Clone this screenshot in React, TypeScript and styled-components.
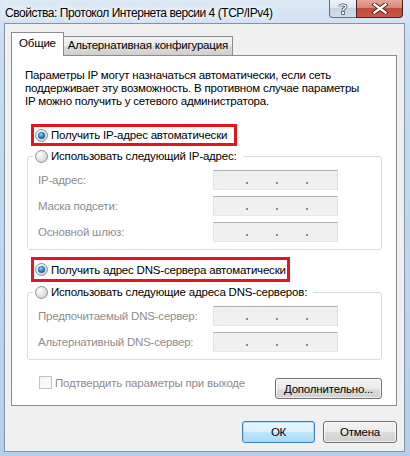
import * as React from 'react';
import styled, {createGlobalStyle, css} from 'styled-components';

const GlobalStyle = createGlobalStyle`
  html, body {
    margin: 0;
    padding: 0;
  }
  body {
    width: 410px;
    height: 456px;
    overflow: hidden;
    font-family: "Liberation Sans", Arial, sans-serif;
    font-size: 11.5px;
    letter-spacing: -0.2px;
    color: #000;
  }
`;

const Window = styled.div`
  width: 410px;
  height: 456px;
  box-sizing: border-box;
  display: flex;
  flex-direction: column;
  background: linear-gradient(to bottom, #dce9f7 0px, #c9dcf2 40px, #b3cfee 100%);
`;

const TitleBar = styled.div`
  height: 23px;
  display: flex;
  align-items: flex-start;
  flex-shrink: 0;
`;

const TitleText = styled.div`
  margin: 5px 0 0 5px;
  font-size: 12px;
  letter-spacing: -0.45px;
  line-height: 16px;
  white-space: nowrap;
  text-shadow: 0 0 6px #fff, 0 0 8px #fff, 0 0 10px #fff;
`;

const CaptionButtons = styled.div`
  margin-left: auto;
  margin-right: 7px;
  display: flex;
`;

const CaptionButton = styled.div<{ $close?: boolean }>`
  height: 18px;
  box-sizing: border-box;
  display: flex;
  align-items: center;
  justify-content: center;
  border: 1px solid #5f6f83;
  border-top: none;
  ${props => props.$close ? css`
    width: 47px;
    border-color: #4a1e18;
    border-radius: 0 0 4px 0;
    background: linear-gradient(to bottom, #e6a59a 0%, #d98577 45%, #c34a3a 50%, #c9574a 100%);
  ` : css`
    width: 27px;
    border-right: none;
    border-radius: 0 0 0 4px;
    background: linear-gradient(to bottom, #eef3f9 0%, #dde6f0 45%, #c7d4e3 50%, #d3deea 100%);
  `}
`;

const Client = styled.div`
  flex: 1;
  margin: 0 5px 4px 4px;
  border: 1px solid #8193a9;
  background: #f0f0f0;
  padding: 9px 0 0 6px;
  display: flex;
  flex-direction: column;
`;

const TabStrip = styled.div`
  display: flex;
  align-items: flex-end;
  height: 22px;
  flex-shrink: 0;
  position: relative;
  z-index: 1;
`;

const Tab = styled.div<{ $active?: boolean }>`
  box-sizing: border-box;
  border: 1px solid #898c95;
  white-space: nowrap;
  ${props => props.$active ? css`
    height: 24px;
    margin-bottom: -1px;
    padding: 4px 7px 0 7px;
    background: #fff;
    border-bottom: none;
  ` : css`
    height: 19px;
    margin-left: -1px;
    padding: 2px 4px 0 4px;
    border-bottom: none;
    background: linear-gradient(to bottom, #f2f2f2 0%, #ebebeb 50%, #dddddd 51%, #cfcfcf 100%);
  `}
`;

const Panel = styled.div`
  width: 386px;
  height: 351px;
  flex-shrink: 0;
  box-sizing: border-box;
  border: 1px solid #898c95;
  background: #fff;
  padding: 13px 13px 0 13px;
  display: flex;
  flex-direction: column;
`;

const Intro = styled.p`
  margin: 0 0 16px 0;
  line-height: 13px;
  white-space: nowrap;
`;

const Highlight = styled.div<{ $width: number; $height: number }>`
  width: ${props => props.$width}px;
  height: ${props => props.$height}px;
  flex-shrink: 0;
  box-sizing: border-box;
  margin-left: 6px;
  border: 3px solid #e8141c;
  display: flex;
  align-items: center;
  padding-left: 1px;
`;

const RadioRow = styled.label`
  display: flex;
  align-items: center;
  gap: 3px;
  height: 16px;
  white-space: nowrap;
`;

const RadioMark = styled.svg`
  width: 13px;
  height: 13px;
  flex-shrink: 0;
`;

const Group = styled.fieldset<{ $bottom: number }>`
  margin: 2px 1px ${props => props.$bottom}px 2px;
  padding: 6px 10px 7px 10px;
  border: 1px solid #d5dfe5;
  border-radius: 3px;
  display: flex;
  flex-direction: column;
  flex-shrink: 0;
  gap: 6px;
`;

const Legend = styled.legend`
  margin-left: -5px;
  padding: 0 6px 0 2px;
`;

const FieldRow = styled.div`
  display: grid;
  grid-template-columns: 175px 125px;
  align-items: center;
`;

const FieldLabel = styled.span`
  color: #8d8d8d;
  white-space: nowrap;
`;

const IpField = styled.div`
  height: 20px;
  box-sizing: border-box;
  border: 1px solid;
  border-color: #abadb3 #dbdfe6 #e3e9ef #e2e3ea;
  background: #f0f0f0;
  display: flex;
  align-items: flex-end;
  padding: 0 0 5px 32px;
  gap: 28px;
`;

const IpDot = styled.span`
  width: 2px;
  height: 2px;
  background: #8a8a8a;
`;

const BottomRow = styled.div`
  margin-top: 18px;
  display: flex;
  align-items: flex-start;
  justify-content: space-between;
  padding-right: 1px;
`;

const CheckRow = styled.label`
  display: flex;
  align-items: center;
  gap: 3px;
  margin: -2px 0 0 14px;
  color: #8d8d8d;
  white-space: nowrap;
`;

const CheckBox = styled.span`
  width: 13px;
  height: 13px;
  box-sizing: border-box;
  border: 1px solid #c2c2c2;
  background: linear-gradient(to bottom right, #f4f4f4, #fcfcfc);
`;

const Button = styled.button<{ $width: number; $height: number; $default?: boolean }>`
  width: ${props => props.$width}px;
  height: ${props => props.$height}px;
  padding: 0;
  font-family: inherit;
  font-size: 11.5px;
  letter-spacing: -0.2px;
  color: #000;
  border: 1px solid #707070;
  border-radius: 3px;
  background: linear-gradient(to bottom, #f2f2f2 0%, #ebebeb 50%, #dddddd 51%, #cfcfcf 100%);
  box-shadow: inset 0 0 0 1px rgba(255, 255, 255, 0.7);
  ${props => props.$default && css`
    border-color: #3c7fb1;
    background: linear-gradient(to bottom, #eaf6fd 0%, #d9f0fc 50%, #bee6fd 51%, #a7d9f5 100%);
    box-shadow: inset 0 0 0 1px rgba(160, 220, 250, 0.9);
  `}
`;

const Footer = styled.div`
  width: 386px;
  margin-top: 15px;
  display: flex;
  justify-content: flex-end;
  gap: 8px;
`;

const Radio = ({checked}: { checked?: boolean }) => (
  <RadioMark viewBox="0 0 13 13">
    <defs>
      <radialGradient id="rbg" cx="0.35" cy="0.3" r="0.8">
        <stop offset="0" stopColor="#ffffff"/>
        <stop offset="1" stopColor="#cfcfcf"/>
      </radialGradient>
      <radialGradient id="rdot" cx="0.4" cy="0.35" r="0.7">
        <stop offset="0" stopColor="#8fd7fb"/>
        <stop offset="0.6" stopColor="#2a86c8"/>
        <stop offset="1" stopColor="#10467a"/>
      </radialGradient>
    </defs>
    <circle cx="6.5" cy="6.5" r="6" fill="url(#rbg)" stroke="#8e8f8f" strokeWidth="1"/>
    {checked && <circle cx="6.5" cy="6.5" r="3.3" fill="url(#rdot)" stroke="#1b5f98" strokeWidth="0.6"/>}
  </RadioMark>
);

const IpInput = () => (
  <IpField>
    <IpDot/><IpDot/><IpDot/>
  </IpField>
);

const HelpIcon = () => (
  <svg width="10" height="12" viewBox="0 0 10 12">
    <path d="M2 3.5 C2 1.5 8 1.2 8 3.6 C8 5.4 5 5.4 5 7.5" fill="none" stroke="#43526a" strokeWidth="3"/>
    <path d="M2 3.5 C2 1.5 8 1.2 8 3.6 C8 5.4 5 5.4 5 7.5" fill="none" stroke="#fff" strokeWidth="1.4"/>
    <rect x="3.6" y="8.6" width="2.8" height="2.8" fill="#fff" stroke="#43526a" strokeWidth="0.8"/>
  </svg>
);

const CloseIcon = () => (
  <svg width="16" height="11" viewBox="0 0 16 11">
    <path d="M2.5 1.5 L13.5 9.5 M13.5 1.5 L2.5 9.5" stroke="#5a1a12" strokeWidth="4.2" strokeLinecap="square"/>
    <path d="M2.5 1.5 L13.5 9.5 M13.5 1.5 L2.5 9.5" stroke="#fff" strokeWidth="2.4" strokeLinecap="square"/>
  </svg>
);

const App = () => (
  <Window>
    <GlobalStyle/>
    <TitleBar>
      <TitleText>Свойства: Протокол Интернета версии 4 (TCP/IPv4)</TitleText>
      <CaptionButtons>
        <CaptionButton><HelpIcon/></CaptionButton>
        <CaptionButton $close><CloseIcon/></CaptionButton>
      </CaptionButtons>
    </TitleBar>
    <Client>
      <TabStrip>
        <Tab $active>Общие</Tab>
        <Tab>Альтернативная конфигурация</Tab>
      </TabStrip>
      <Panel>
        <Intro>
          Параметры IP могут назначаться автоматически, если сеть<br/>
          поддерживает эту возможность. В противном случае параметры<br/>
          IP можно получить у сетевого администратора.
        </Intro>
        <Highlight $width={206} $height={22}>
          <RadioRow><Radio checked/>Получить IP-адрес автоматически</RadioRow>
        </Highlight>
        <Group $bottom={7}>
          <Legend><RadioRow><Radio/>Использовать следующий IP-адрес:</RadioRow></Legend>
          <FieldRow><FieldLabel>IP-адрес:</FieldLabel><IpInput/></FieldRow>
          <FieldRow><FieldLabel>Маска подсети:</FieldLabel><IpInput/></FieldRow>
          <FieldRow><FieldLabel>Основной шлюз:</FieldLabel><IpInput/></FieldRow>
        </Group>
        <Highlight $width={259} $height={25}>
          <RadioRow><Radio checked/>Получить адрес DNS-сервера автоматически</RadioRow>
        </Highlight>
        <Group $bottom={0}>
          <Legend><RadioRow><Radio/>Использовать следующие адреса DNS-серверов:</RadioRow></Legend>
          <FieldRow><FieldLabel>Предпочитаемый DNS-сервер:</FieldLabel><IpInput/></FieldRow>
          <FieldRow><FieldLabel>Альтернативный DNS-сервер:</FieldLabel><IpInput/></FieldRow>
        </Group>
        <BottomRow>
          <CheckRow><CheckBox/>Подтвердить параметры при выходе</CheckRow>
          <Button $width={107} $height={21}>Дополнительно...</Button>
        </BottomRow>
      </Panel>
      <Footer>
        <Button $width={73} $height={22} $default>ОК</Button>
        <Button $width={74} $height={22}>Отмена</Button>
      </Footer>
    </Client>
  </Window>
);

export default App;
